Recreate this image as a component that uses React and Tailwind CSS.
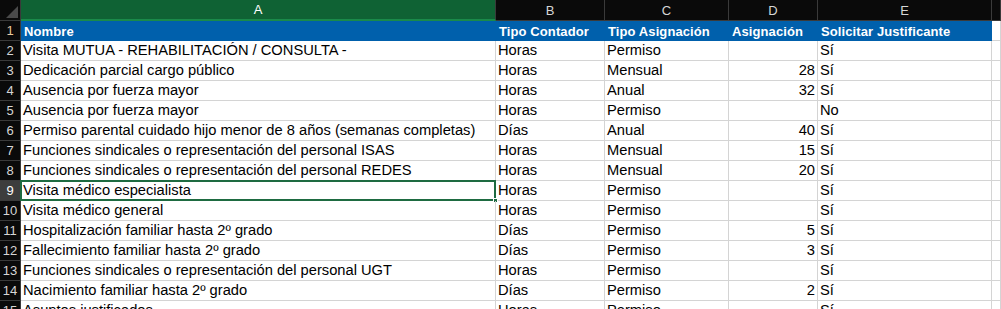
import React from "react";

const rows = [
  ["Visita MUTUA - REHABILITACIÓN / CONSULTA -", "Horas", "Permiso", "", "Sí"],
  ["Dedicación parcial cargo público", "Horas", "Mensual", "28", "Sí"],
  ["Ausencia por fuerza mayor", "Horas", "Anual", "32", "Sí"],
  ["Ausencia por fuerza mayor", "Horas", "Permiso", "", "No"],
  ["Permiso parental cuidado hijo menor de 8 años (semanas completas)", "Días", "Anual", "40", "Sí"],
  ["Funciones sindicales o representación del personal ISAS", "Horas", "Mensual", "15", "Sí"],
  ["Funciones sindicales o representación del personal REDES", "Horas", "Mensual", "20", "Sí"],
  ["Visita médico especialista", "Horas", "Permiso", "", "Sí"],
  ["Visita médico general", "Horas", "Permiso", "", "Sí"],
  ["Hospitalización familiar hasta 2º grado", "Días", "Permiso", "5", "Sí"],
  ["Fallecimiento familiar hasta 2º grado", "Días", "Permiso", "3", "Sí"],
  ["Funciones sindicales o representación del personal UGT", "Horas", "Permiso", "", "Sí"],
  ["Nacimiento familiar hasta 2º grado", "Días", "Permiso", "2", "Sí"],
  ["Asuntos justificados", "Horas", "Permiso", "", "Sí"],
];

const grid = "grid grid-cols-[21px_475px_109px_124px_89px_174px_1fr]";

export default function App() {
  return (
    <div
      className="w-[1001px] h-[309px] overflow-hidden bg-white text-[14.7px] leading-none"
      style={{ fontFamily: '"Liberation Sans", Arial, sans-serif' }}
    >
      {/* column header */}
      <div className={`${grid} h-[21px] bg-[#0a0a0a] text-[#d6d6d6] text-[13px]`}>
        <div className="relative border-r border-b border-[#3a3a3a]">
          <div className="absolute right-[2px] bottom-[2px] w-0 h-0 border-l-[12px] border-l-transparent border-b-[12px] border-b-[#4a4a4a]" />
        </div>
        <div className="flex items-center justify-center bg-[#0f6234] text-white border-r border-[#3a3a3a] border-b-2 border-b-[#1a8a4a]">A</div>
        {["B", "C", "D", "E", ""].map((c, i) => (
          <div key={i} className="flex items-center justify-center border-r border-b border-[#3a3a3a]">
            {c}
          </div>
        ))}
      </div>

      {/* header row */}
      <div className={`${grid} h-[20px]`}>
        <div className="flex items-center justify-center bg-[#0a0a0a] text-[#e8c9a0] text-[13px] border-r border-b border-[#3a3a3a]">1</div>
        {["Nombre", "Tipo Contador", "Tipo Asignación", "Asignación", "Solicitar Justificante"].map((h, i) => (
          <div key={i} className="flex items-center bg-[#0060ac] text-white font-bold text-[13px] tracking-[0.1px] pl-[3px] whitespace-nowrap overflow-hidden">
            {h}
          </div>
        ))}
        <div className="border-r border-b border-[#d4d4d4]" />
      </div>

      {rows.map((r, idx) => {
        const n = idx + 2;
        const sel = n === 9;
        return (
          <div key={n} className={`${grid} h-[20px]`}>
            <div
              className={`flex items-center justify-center text-[13px] border-r border-b border-[#3a3a3a] ${
                sel ? "bg-[#3d3d3d] text-white" : "bg-[#0a0a0a] text-[#d6d6d6]"
              }`}
            >
              {n}
            </div>
            <div className="relative flex items-center pl-[2px] text-black whitespace-nowrap overflow-visible border-r border-b border-[#d4d4d4]">
              {r[0]}
              {sel && (
                <>
                  <div className="absolute left-[-1px] top-[-1px] right-[-1px] bottom-[-1px] border-2 border-[#1e6b41] pointer-events-none" />
                  <div className="absolute right-[-3px] bottom-[-3px] w-[5px] h-[5px] bg-[#1e6b41] border border-white" />
                </>
              )}
            </div>
            <div className="flex items-center pl-[2px] text-black border-r border-b border-[#d4d4d4]">{r[1]}</div>
            <div className="flex items-center pl-[2px] text-black border-r border-b border-[#d4d4d4]">{r[2]}</div>
            <div className="flex items-center justify-end pr-[2px] text-black border-r border-b border-[#d4d4d4]">{r[3]}</div>
            <div className="flex items-center pl-[2px] text-black border-r border-b border-[#d4d4d4]">{r[4]}</div>
            <div className="border-r border-b border-[#d4d4d4]" />
          </div>
        );
      })}
    </div>
  );
}
